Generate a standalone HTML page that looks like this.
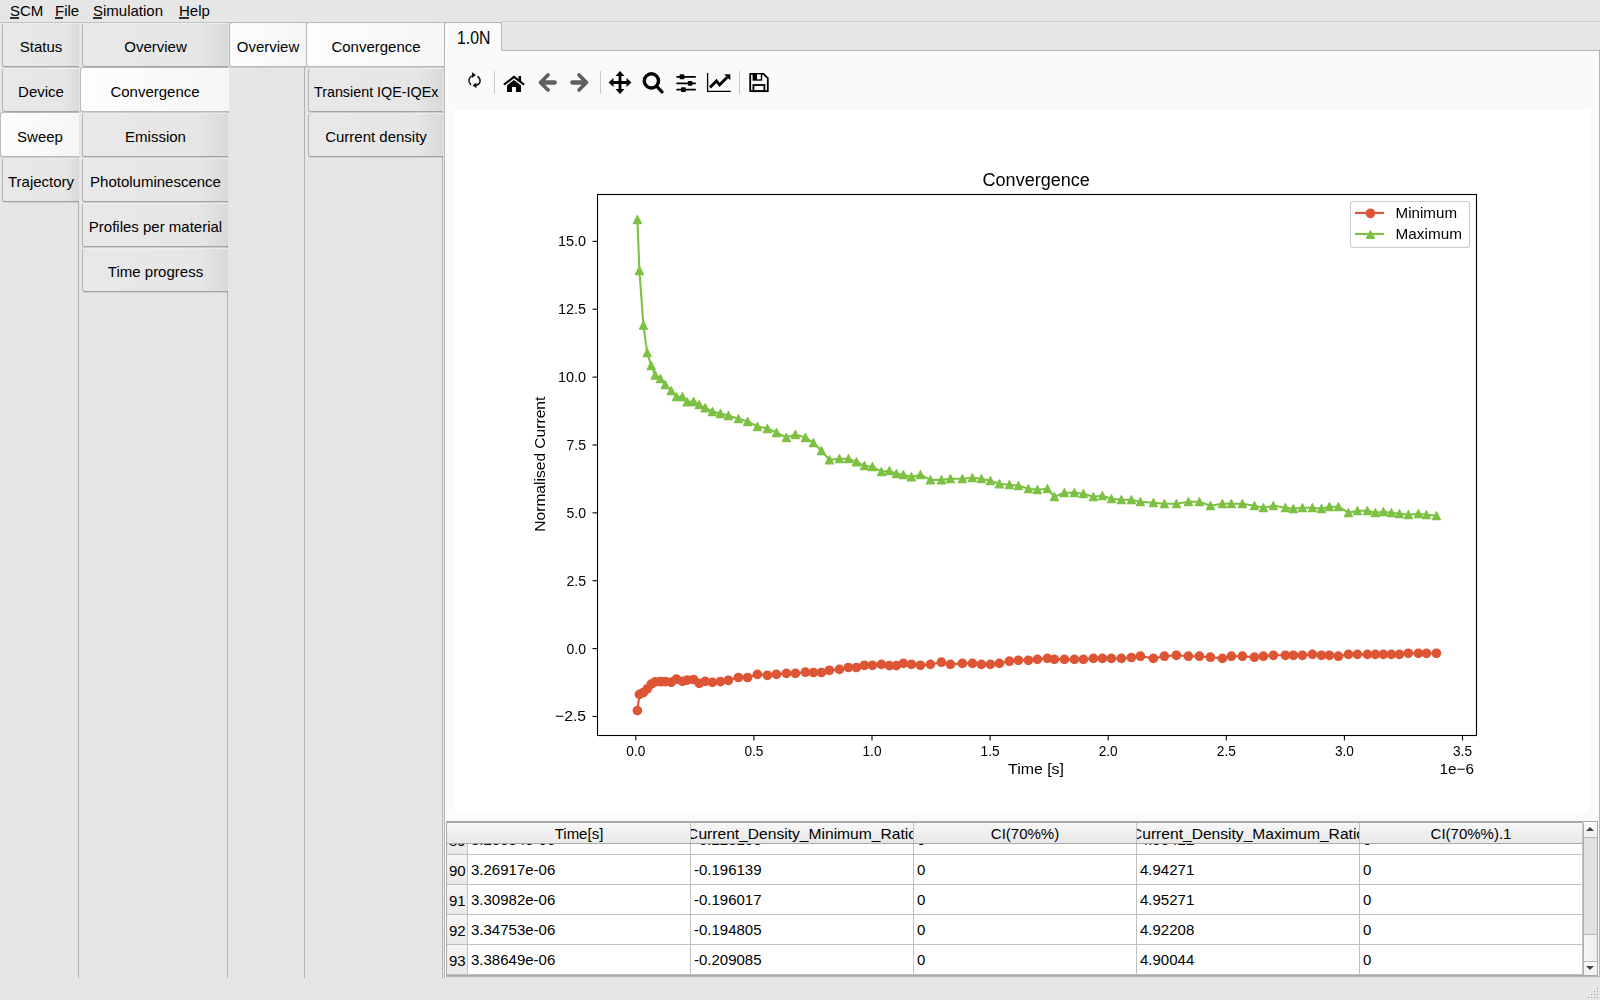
<!DOCTYPE html>
<html><head><meta charset="utf-8"><style>
html,body{margin:0;padding:0;}
body{width:1600px;height:1000px;overflow:hidden;position:relative;background:#e6e6e6;font-family:"Liberation Sans", sans-serif;font-size:15px;color:#000;}
.a{position:absolute;}
.t{position:absolute;white-space:nowrap;line-height:1;}
.tab{position:absolute;box-sizing:border-box;border:1px solid #b4b4b4;border-top-color:#ededed;border-bottom-color:#a4a4a4;box-shadow:0 1px 0 rgba(0,0,0,0.10);border-right:none;border-radius:3px 0 0 3px;
 background:linear-gradient(to right,#e8e8e8 0%,#e6e6e6 80%,#d9d9d9 100%);}
.tab.sel{background:linear-gradient(to right,#fdfdfd,#f6f6f6);border-color:#b8b8b8;}
.lbl{position:absolute;left:0;right:0;text-align:center;white-space:nowrap;line-height:1;}
.vl{position:absolute;width:1px;background:#b4b4b4;}
.hl{position:absolute;height:1px;background:#b4b4b4;}
</style></head><body>

<div class="t" style="left:10px;top:3px;">SCM</div>
<div class="a" style="left:10px;top:17px;width:9px;height:2px;background:#111;opacity:0.85"></div>
<div class="t" style="left:55px;top:3px;">File</div>
<div class="a" style="left:55px;top:17px;width:8px;height:2px;background:#111;opacity:0.85"></div>
<div class="t" style="left:93px;top:3px;">Simulation</div>
<div class="a" style="left:93px;top:17px;width:9px;height:2px;background:#111;opacity:0.85"></div>
<div class="t" style="left:179px;top:3px;">Help</div>
<div class="a" style="left:179px;top:17px;width:10px;height:2px;background:#111;opacity:0.85"></div>
<div class="hl" style="left:0;top:22px;width:502px;background:#c4c4c4"></div>
<div class="hl" style="left:502px;top:21px;width:1098px;background:#cdcdcd"></div>
<div class="vl" style="left:78px;top:22px;height:956px;"></div>
<div class="vl" style="left:227px;top:22px;height:956px;"></div>
<div class="vl" style="left:304px;top:22px;height:956px;"></div>
<div class="vl" style="left:444px;top:22px;height:956px;"></div>
<div class="vl" style="left:442px;top:66px;height:912px;background:#b8b8b8"></div>
<div class="tab" style="left:2px;top:23px;width:77px;height:44px;"><div class="lbl" style="top:15px">Status</div></div>
<div class="tab" style="left:2px;top:68px;width:77px;height:44px;"><div class="lbl" style="top:15px">Device</div></div>
<div class="tab sel" style="left:0px;top:112px;width:79px;height:45px;"><div class="lbl" style="top:16px">Sweep</div></div>
<div class="tab" style="left:2px;top:158px;width:77px;height:44px;"><div class="lbl" style="top:15px">Trajectory</div></div>
<div class="tab" style="left:82px;top:23px;width:146px;height:44px;"><div class="lbl" style="top:15px">Overview</div></div>
<div class="tab sel" style="left:80px;top:67px;width:149px;height:45px;"><div class="lbl" style="top:16px">Convergence</div></div>
<div class="tab" style="left:82px;top:113px;width:146px;height:44px;"><div class="lbl" style="top:15px">Emission</div></div>
<div class="tab" style="left:82px;top:158px;width:146px;height:44px;"><div class="lbl" style="top:15px">Photoluminescence</div></div>
<div class="tab" style="left:82px;top:203px;width:146px;height:44px;"><div class="lbl" style="top:15px">Profiles per material</div></div>
<div class="tab" style="left:82px;top:248px;width:146px;height:44px;"><div class="lbl" style="top:15px">Time progress</div></div>
<div class="tab sel" style="left:229px;top:22px;width:77px;height:45px;"><div class="lbl" style="top:16px">Overview</div></div>
<div class="tab sel" style="left:306px;top:22px;width:139px;height:45px;"><div class="lbl" style="top:16px">Convergence</div></div>
<div class="tab" style="left:308px;top:68px;width:135px;height:44px;"><div class="lbl" style="top:15px"><span style="display:inline-block;transform:scaleX(0.955)">Transient IQE-IQEx</span></div></div>
<div class="tab" style="left:308px;top:113px;width:135px;height:44px;"><div class="lbl" style="top:15px">Current density</div></div>
<div class="a" style="left:445px;top:23px;width:1155px;height:27px;background:#e6e6e6"></div>
<div class="a" style="left:444px;top:50px;width:1156px;height:927px;background:#fafafa;border:1px solid #b4b4b4;box-sizing:border-box;"></div>
<div class="a" style="left:444px;top:22px;width:58px;height:29px;background:#fafafa;border:1px solid #b4b4b4;border-bottom:none;border-radius:3px 3px 0 0;box-sizing:border-box;"><div class="t" style="left:12px;top:6px;font-size:18px;transform:scaleX(0.88);transform-origin:0 0">1.0N</div></div>
<div class="a" style="left:445px;top:51px;width:1px;height:926px;background:#fff"></div>
<div class="a" style="left:455px;top:110px;width:1134px;height:702px;background:#fff"></div>
<svg class="a" style="left:0;top:0;will-change:transform" width="1600" height="1000" viewBox="0 0 1600 1000">
<line x1="592.5" y1="716.47" x2="597.5" y2="716.47" stroke="#000" stroke-width="1.1"/>
<text x="586" y="721.47" text-anchor="end" style="font-family:"Liberation Sans",sans-serif;font-size:14.6px;fill:#000" textLength="31" lengthAdjust="spacingAndGlyphs">−2.5</text>
<line x1="592.5" y1="648.60" x2="597.5" y2="648.60" stroke="#000" stroke-width="1.1"/>
<text x="586" y="653.60" text-anchor="end" style="font-family:"Liberation Sans",sans-serif;font-size:14.6px;fill:#000" textLength="19.5" lengthAdjust="spacingAndGlyphs">0.0</text>
<line x1="592.5" y1="580.73" x2="597.5" y2="580.73" stroke="#000" stroke-width="1.1"/>
<text x="586" y="585.73" text-anchor="end" style="font-family:"Liberation Sans",sans-serif;font-size:14.6px;fill:#000" textLength="19.5" lengthAdjust="spacingAndGlyphs">2.5</text>
<line x1="592.5" y1="512.86" x2="597.5" y2="512.86" stroke="#000" stroke-width="1.1"/>
<text x="586" y="517.86" text-anchor="end" style="font-family:"Liberation Sans",sans-serif;font-size:14.6px;fill:#000" textLength="19.5" lengthAdjust="spacingAndGlyphs">5.0</text>
<line x1="592.5" y1="444.98" x2="597.5" y2="444.98" stroke="#000" stroke-width="1.1"/>
<text x="586" y="449.98" text-anchor="end" style="font-family:"Liberation Sans",sans-serif;font-size:14.6px;fill:#000" textLength="19.5" lengthAdjust="spacingAndGlyphs">7.5</text>
<line x1="592.5" y1="377.11" x2="597.5" y2="377.11" stroke="#000" stroke-width="1.1"/>
<text x="586" y="382.11" text-anchor="end" style="font-family:"Liberation Sans",sans-serif;font-size:14.6px;fill:#000" textLength="28" lengthAdjust="spacingAndGlyphs">10.0</text>
<line x1="592.5" y1="309.24" x2="597.5" y2="309.24" stroke="#000" stroke-width="1.1"/>
<text x="586" y="314.24" text-anchor="end" style="font-family:"Liberation Sans",sans-serif;font-size:14.6px;fill:#000" textLength="28" lengthAdjust="spacingAndGlyphs">12.5</text>
<line x1="592.5" y1="241.37" x2="597.5" y2="241.37" stroke="#000" stroke-width="1.1"/>
<text x="586" y="246.37" text-anchor="end" style="font-family:"Liberation Sans",sans-serif;font-size:14.6px;fill:#000" textLength="28" lengthAdjust="spacingAndGlyphs">15.0</text>
<line x1="635.80" y1="735.5" x2="635.80" y2="740.5" stroke="#000" stroke-width="1.1"/>
<text x="635.80" y="756" text-anchor="middle" style="font-family:"Liberation Sans",sans-serif;font-size:14.6px;fill:#000" textLength="19" lengthAdjust="spacingAndGlyphs">0.0</text>
<line x1="753.90" y1="735.5" x2="753.90" y2="740.5" stroke="#000" stroke-width="1.1"/>
<text x="753.90" y="756" text-anchor="middle" style="font-family:"Liberation Sans",sans-serif;font-size:14.6px;fill:#000" textLength="19" lengthAdjust="spacingAndGlyphs">0.5</text>
<line x1="872.00" y1="735.5" x2="872.00" y2="740.5" stroke="#000" stroke-width="1.1"/>
<text x="872.00" y="756" text-anchor="middle" style="font-family:"Liberation Sans",sans-serif;font-size:14.6px;fill:#000" textLength="19" lengthAdjust="spacingAndGlyphs">1.0</text>
<line x1="990.10" y1="735.5" x2="990.10" y2="740.5" stroke="#000" stroke-width="1.1"/>
<text x="990.10" y="756" text-anchor="middle" style="font-family:"Liberation Sans",sans-serif;font-size:14.6px;fill:#000" textLength="19" lengthAdjust="spacingAndGlyphs">1.5</text>
<line x1="1108.20" y1="735.5" x2="1108.20" y2="740.5" stroke="#000" stroke-width="1.1"/>
<text x="1108.20" y="756" text-anchor="middle" style="font-family:"Liberation Sans",sans-serif;font-size:14.6px;fill:#000" textLength="19" lengthAdjust="spacingAndGlyphs">2.0</text>
<line x1="1226.30" y1="735.5" x2="1226.30" y2="740.5" stroke="#000" stroke-width="1.1"/>
<text x="1226.30" y="756" text-anchor="middle" style="font-family:"Liberation Sans",sans-serif;font-size:14.6px;fill:#000" textLength="19" lengthAdjust="spacingAndGlyphs">2.5</text>
<line x1="1344.40" y1="735.5" x2="1344.40" y2="740.5" stroke="#000" stroke-width="1.1"/>
<text x="1344.40" y="756" text-anchor="middle" style="font-family:"Liberation Sans",sans-serif;font-size:14.6px;fill:#000" textLength="19" lengthAdjust="spacingAndGlyphs">3.0</text>
<line x1="1462.50" y1="735.5" x2="1462.50" y2="740.5" stroke="#000" stroke-width="1.1"/>
<text x="1462.50" y="756" text-anchor="middle" style="font-family:"Liberation Sans",sans-serif;font-size:14.6px;fill:#000" textLength="19" lengthAdjust="spacingAndGlyphs">3.5</text>
<text x="1474" y="774" text-anchor="end" style="font-family:"Liberation Sans",sans-serif;font-size:14.6px;fill:#000" textLength="34.5" lengthAdjust="spacingAndGlyphs">1e−6</text>
<text x="1036" y="774" text-anchor="middle" style="font-family:"Liberation Sans",sans-serif;font-size:14.6px;fill:#000" textLength="56" lengthAdjust="spacingAndGlyphs">Time [s]</text>
<text transform="translate(544.5,464.2) rotate(-90)" x="0" y="0" text-anchor="middle" style="font-family:"Liberation Sans",sans-serif;font-size:14.6px;fill:#000" textLength="135" lengthAdjust="spacingAndGlyphs">Normalised Current</text>
<text x="1036.2" y="186.1" text-anchor="middle" style="font-family:'Liberation Sans',sans-serif;font-size:18px;fill:#000" textLength="107.3" lengthAdjust="spacingAndGlyphs">Convergence</text>
<clipPath id="ax"><rect x="597.5" y="194.5" width="879" height="541"/></clipPath>
<g clip-path="url(#ax)">
<polyline fill="none" stroke="#de5535" stroke-width="2.08" stroke-linejoin="round" stroke-linecap="square" points="637.4,710.6 639.4,694.4 643.4,692.5 647.2,688.9 651.2,684.1 655.2,681.9 660.4,681.7 665.2,681.6 671.2,682.2 676.4,679.2 682.4,681.3 687.2,680.1 693.6,679.5 699.2,683.3 705.2,681.4 712.4,682.4 720.4,681.6 728.4,680.3 738.4,677.5 747.6,677.5 757.4,674.4 767.4,675.3 776.4,674.4 786.4,673.4 795.4,673.4 805.4,672.2 813.4,672.5 821.4,672.5 829.4,670.3 839.4,669.4 848.4,667.5 856.4,667.5 864.4,665.3 872.4,665.3 881.4,664.4 889.4,665.6 896.4,665.6 903.4,663.4 911.4,664.4 920.4,665.3 930.4,664.4 941.4,662.2 950.4,664.4 962.4,663.4 972.4,663.4 981.4,664.4 990.4,664.4 999.4,663.4 1009.4,661.2 1018.4,660.3 1028.4,660.3 1037.4,659.4 1047.4,658.4 1054.4,659.4 1064.4,659.4 1074.4,659.4 1083.4,659.4 1093.4,658.4 1102.4,658.4 1111.4,658.4 1121.4,658.4 1131.4,657.5 1140.4,656.2 1153.4,658.4 1164.4,656.2 1176.4,655.3 1188.4,656.2 1199.4,656.2 1210.4,657.2 1222.4,658.4 1231.4,656.2 1242.4,656.2 1254.4,657.2 1263.4,656.2 1273.4,655.3 1285.4,655.3 1293.4,655.3 1302.4,655.3 1312.4,654.4 1321.4,655.3 1329.4,655.3 1338.4,656.2 1348.4,654.4 1357.4,654.4 1367.4,654.4 1375.4,654.4 1383.4,654.4 1391.4,654.4 1399.4,654.4 1408.4,653.3 1418.4,653.3 1426.4,653.3 1436.4,653.3"/>
<circle cx="637.4" cy="710.6" r="4.85" fill="#de5535"/>
<circle cx="639.4" cy="694.4" r="4.85" fill="#de5535"/>
<circle cx="643.4" cy="692.5" r="4.85" fill="#de5535"/>
<circle cx="647.2" cy="688.9" r="4.85" fill="#de5535"/>
<circle cx="651.2" cy="684.1" r="4.85" fill="#de5535"/>
<circle cx="655.2" cy="681.9" r="4.85" fill="#de5535"/>
<circle cx="660.4" cy="681.7" r="4.85" fill="#de5535"/>
<circle cx="665.2" cy="681.6" r="4.85" fill="#de5535"/>
<circle cx="671.2" cy="682.2" r="4.85" fill="#de5535"/>
<circle cx="676.4" cy="679.2" r="4.85" fill="#de5535"/>
<circle cx="682.4" cy="681.3" r="4.85" fill="#de5535"/>
<circle cx="687.2" cy="680.1" r="4.85" fill="#de5535"/>
<circle cx="693.6" cy="679.5" r="4.85" fill="#de5535"/>
<circle cx="699.2" cy="683.3" r="4.85" fill="#de5535"/>
<circle cx="705.2" cy="681.4" r="4.85" fill="#de5535"/>
<circle cx="712.4" cy="682.4" r="4.85" fill="#de5535"/>
<circle cx="720.4" cy="681.6" r="4.85" fill="#de5535"/>
<circle cx="728.4" cy="680.3" r="4.85" fill="#de5535"/>
<circle cx="738.4" cy="677.5" r="4.85" fill="#de5535"/>
<circle cx="747.6" cy="677.5" r="4.85" fill="#de5535"/>
<circle cx="757.4" cy="674.4" r="4.85" fill="#de5535"/>
<circle cx="767.4" cy="675.3" r="4.85" fill="#de5535"/>
<circle cx="776.4" cy="674.4" r="4.85" fill="#de5535"/>
<circle cx="786.4" cy="673.4" r="4.85" fill="#de5535"/>
<circle cx="795.4" cy="673.4" r="4.85" fill="#de5535"/>
<circle cx="805.4" cy="672.2" r="4.85" fill="#de5535"/>
<circle cx="813.4" cy="672.5" r="4.85" fill="#de5535"/>
<circle cx="821.4" cy="672.5" r="4.85" fill="#de5535"/>
<circle cx="829.4" cy="670.3" r="4.85" fill="#de5535"/>
<circle cx="839.4" cy="669.4" r="4.85" fill="#de5535"/>
<circle cx="848.4" cy="667.5" r="4.85" fill="#de5535"/>
<circle cx="856.4" cy="667.5" r="4.85" fill="#de5535"/>
<circle cx="864.4" cy="665.3" r="4.85" fill="#de5535"/>
<circle cx="872.4" cy="665.3" r="4.85" fill="#de5535"/>
<circle cx="881.4" cy="664.4" r="4.85" fill="#de5535"/>
<circle cx="889.4" cy="665.6" r="4.85" fill="#de5535"/>
<circle cx="896.4" cy="665.6" r="4.85" fill="#de5535"/>
<circle cx="903.4" cy="663.4" r="4.85" fill="#de5535"/>
<circle cx="911.4" cy="664.4" r="4.85" fill="#de5535"/>
<circle cx="920.4" cy="665.3" r="4.85" fill="#de5535"/>
<circle cx="930.4" cy="664.4" r="4.85" fill="#de5535"/>
<circle cx="941.4" cy="662.2" r="4.85" fill="#de5535"/>
<circle cx="950.4" cy="664.4" r="4.85" fill="#de5535"/>
<circle cx="962.4" cy="663.4" r="4.85" fill="#de5535"/>
<circle cx="972.4" cy="663.4" r="4.85" fill="#de5535"/>
<circle cx="981.4" cy="664.4" r="4.85" fill="#de5535"/>
<circle cx="990.4" cy="664.4" r="4.85" fill="#de5535"/>
<circle cx="999.4" cy="663.4" r="4.85" fill="#de5535"/>
<circle cx="1009.4" cy="661.2" r="4.85" fill="#de5535"/>
<circle cx="1018.4" cy="660.3" r="4.85" fill="#de5535"/>
<circle cx="1028.4" cy="660.3" r="4.85" fill="#de5535"/>
<circle cx="1037.4" cy="659.4" r="4.85" fill="#de5535"/>
<circle cx="1047.4" cy="658.4" r="4.85" fill="#de5535"/>
<circle cx="1054.4" cy="659.4" r="4.85" fill="#de5535"/>
<circle cx="1064.4" cy="659.4" r="4.85" fill="#de5535"/>
<circle cx="1074.4" cy="659.4" r="4.85" fill="#de5535"/>
<circle cx="1083.4" cy="659.4" r="4.85" fill="#de5535"/>
<circle cx="1093.4" cy="658.4" r="4.85" fill="#de5535"/>
<circle cx="1102.4" cy="658.4" r="4.85" fill="#de5535"/>
<circle cx="1111.4" cy="658.4" r="4.85" fill="#de5535"/>
<circle cx="1121.4" cy="658.4" r="4.85" fill="#de5535"/>
<circle cx="1131.4" cy="657.5" r="4.85" fill="#de5535"/>
<circle cx="1140.4" cy="656.2" r="4.85" fill="#de5535"/>
<circle cx="1153.4" cy="658.4" r="4.85" fill="#de5535"/>
<circle cx="1164.4" cy="656.2" r="4.85" fill="#de5535"/>
<circle cx="1176.4" cy="655.3" r="4.85" fill="#de5535"/>
<circle cx="1188.4" cy="656.2" r="4.85" fill="#de5535"/>
<circle cx="1199.4" cy="656.2" r="4.85" fill="#de5535"/>
<circle cx="1210.4" cy="657.2" r="4.85" fill="#de5535"/>
<circle cx="1222.4" cy="658.4" r="4.85" fill="#de5535"/>
<circle cx="1231.4" cy="656.2" r="4.85" fill="#de5535"/>
<circle cx="1242.4" cy="656.2" r="4.85" fill="#de5535"/>
<circle cx="1254.4" cy="657.2" r="4.85" fill="#de5535"/>
<circle cx="1263.4" cy="656.2" r="4.85" fill="#de5535"/>
<circle cx="1273.4" cy="655.3" r="4.85" fill="#de5535"/>
<circle cx="1285.4" cy="655.3" r="4.85" fill="#de5535"/>
<circle cx="1293.4" cy="655.3" r="4.85" fill="#de5535"/>
<circle cx="1302.4" cy="655.3" r="4.85" fill="#de5535"/>
<circle cx="1312.4" cy="654.4" r="4.85" fill="#de5535"/>
<circle cx="1321.4" cy="655.3" r="4.85" fill="#de5535"/>
<circle cx="1329.4" cy="655.3" r="4.85" fill="#de5535"/>
<circle cx="1338.4" cy="656.2" r="4.85" fill="#de5535"/>
<circle cx="1348.4" cy="654.4" r="4.85" fill="#de5535"/>
<circle cx="1357.4" cy="654.4" r="4.85" fill="#de5535"/>
<circle cx="1367.4" cy="654.4" r="4.85" fill="#de5535"/>
<circle cx="1375.4" cy="654.4" r="4.85" fill="#de5535"/>
<circle cx="1383.4" cy="654.4" r="4.85" fill="#de5535"/>
<circle cx="1391.4" cy="654.4" r="4.85" fill="#de5535"/>
<circle cx="1399.4" cy="654.4" r="4.85" fill="#de5535"/>
<circle cx="1408.4" cy="653.3" r="4.85" fill="#de5535"/>
<circle cx="1418.4" cy="653.3" r="4.85" fill="#de5535"/>
<circle cx="1426.4" cy="653.3" r="4.85" fill="#de5535"/>
<circle cx="1436.4" cy="653.3" r="4.85" fill="#de5535"/>
<polyline fill="none" stroke="#7dc143" stroke-width="2.08" stroke-linejoin="round" stroke-linecap="square" points="637.4,219.5 639.4,270.6 643.4,325.2 647.2,352.7 651.2,365.5 655.2,375.1 660.4,378.7 665.2,384.7 671.2,390.7 676.4,396.7 682.4,396.7 687.2,401.9 693.6,401.5 699.2,404.7 705.2,407.9 712.4,411.5 720.4,413.5 728.4,415.5 738.4,418.7 747.6,421.5 757.4,426.5 767.4,428.5 776.4,432.5 786.4,437.5 795.4,434.5 805.4,437.5 813.4,442.7 821.4,450.7 829.4,459.9 839.4,458.7 848.4,458.7 856.4,461.9 864.4,465.7 872.4,466.7 881.4,471.7 889.4,470.7 896.4,473.7 903.4,474.7 911.4,476.9 920.4,474.7 930.4,479.9 941.4,479.9 950.4,478.7 962.4,478.7 972.4,477.7 981.4,478.7 990.4,480.7 999.4,483.9 1009.4,484.7 1018.4,485.7 1028.4,488.7 1037.4,489.7 1047.4,488.7 1054.4,496.7 1064.4,492.7 1074.4,492.7 1083.4,493.7 1093.4,496.7 1102.4,495.7 1111.4,498.7 1121.4,499.7 1131.4,499.7 1140.4,501.7 1153.4,502.7 1164.4,503.7 1176.4,503.7 1188.4,501.7 1199.4,501.7 1210.4,505.7 1222.4,503.7 1231.4,503.7 1242.4,503.7 1254.4,505.7 1263.4,507.7 1273.4,505.7 1285.4,507.7 1293.4,508.7 1302.4,507.7 1312.4,507.7 1321.4,508.7 1329.4,506.7 1338.4,506.7 1348.4,512.7 1357.4,510.7 1367.4,510.7 1375.4,512.7 1383.4,511.7 1391.4,512.7 1399.4,513.7 1408.4,514.7 1418.4,513.7 1426.4,514.7 1436.4,515.7"/>
<path d="M637.4,215.5L633.4,223.5L641.4,223.5Z" fill="#7dc143" stroke="#7dc143" stroke-width="1.3" stroke-linejoin="round"/>
<path d="M639.4,266.6L635.4,274.6L643.4,274.6Z" fill="#7dc143" stroke="#7dc143" stroke-width="1.3" stroke-linejoin="round"/>
<path d="M643.4,321.2L639.4,329.2L647.4,329.2Z" fill="#7dc143" stroke="#7dc143" stroke-width="1.3" stroke-linejoin="round"/>
<path d="M647.2,348.7L643.2,356.7L651.2,356.7Z" fill="#7dc143" stroke="#7dc143" stroke-width="1.3" stroke-linejoin="round"/>
<path d="M651.2,361.5L647.2,369.5L655.2,369.5Z" fill="#7dc143" stroke="#7dc143" stroke-width="1.3" stroke-linejoin="round"/>
<path d="M655.2,371.1L651.2,379.1L659.2,379.1Z" fill="#7dc143" stroke="#7dc143" stroke-width="1.3" stroke-linejoin="round"/>
<path d="M660.4,374.7L656.4,382.7L664.4,382.7Z" fill="#7dc143" stroke="#7dc143" stroke-width="1.3" stroke-linejoin="round"/>
<path d="M665.2,380.7L661.2,388.7L669.2,388.7Z" fill="#7dc143" stroke="#7dc143" stroke-width="1.3" stroke-linejoin="round"/>
<path d="M671.2,386.7L667.2,394.7L675.2,394.7Z" fill="#7dc143" stroke="#7dc143" stroke-width="1.3" stroke-linejoin="round"/>
<path d="M676.4,392.7L672.4,400.7L680.4,400.7Z" fill="#7dc143" stroke="#7dc143" stroke-width="1.3" stroke-linejoin="round"/>
<path d="M682.4,392.7L678.4,400.7L686.4,400.7Z" fill="#7dc143" stroke="#7dc143" stroke-width="1.3" stroke-linejoin="round"/>
<path d="M687.2,397.9L683.2,405.9L691.2,405.9Z" fill="#7dc143" stroke="#7dc143" stroke-width="1.3" stroke-linejoin="round"/>
<path d="M693.6,397.5L689.6,405.5L697.6,405.5Z" fill="#7dc143" stroke="#7dc143" stroke-width="1.3" stroke-linejoin="round"/>
<path d="M699.2,400.7L695.2,408.7L703.2,408.7Z" fill="#7dc143" stroke="#7dc143" stroke-width="1.3" stroke-linejoin="round"/>
<path d="M705.2,403.9L701.2,411.9L709.2,411.9Z" fill="#7dc143" stroke="#7dc143" stroke-width="1.3" stroke-linejoin="round"/>
<path d="M712.4,407.5L708.4,415.5L716.4,415.5Z" fill="#7dc143" stroke="#7dc143" stroke-width="1.3" stroke-linejoin="round"/>
<path d="M720.4,409.5L716.4,417.5L724.4,417.5Z" fill="#7dc143" stroke="#7dc143" stroke-width="1.3" stroke-linejoin="round"/>
<path d="M728.4,411.5L724.4,419.5L732.4,419.5Z" fill="#7dc143" stroke="#7dc143" stroke-width="1.3" stroke-linejoin="round"/>
<path d="M738.4,414.7L734.4,422.7L742.4,422.7Z" fill="#7dc143" stroke="#7dc143" stroke-width="1.3" stroke-linejoin="round"/>
<path d="M747.6,417.5L743.6,425.5L751.6,425.5Z" fill="#7dc143" stroke="#7dc143" stroke-width="1.3" stroke-linejoin="round"/>
<path d="M757.4,422.5L753.4,430.5L761.4,430.5Z" fill="#7dc143" stroke="#7dc143" stroke-width="1.3" stroke-linejoin="round"/>
<path d="M767.4,424.5L763.4,432.5L771.4,432.5Z" fill="#7dc143" stroke="#7dc143" stroke-width="1.3" stroke-linejoin="round"/>
<path d="M776.4,428.5L772.4,436.5L780.4,436.5Z" fill="#7dc143" stroke="#7dc143" stroke-width="1.3" stroke-linejoin="round"/>
<path d="M786.4,433.5L782.4,441.5L790.4,441.5Z" fill="#7dc143" stroke="#7dc143" stroke-width="1.3" stroke-linejoin="round"/>
<path d="M795.4,430.5L791.4,438.5L799.4,438.5Z" fill="#7dc143" stroke="#7dc143" stroke-width="1.3" stroke-linejoin="round"/>
<path d="M805.4,433.5L801.4,441.5L809.4,441.5Z" fill="#7dc143" stroke="#7dc143" stroke-width="1.3" stroke-linejoin="round"/>
<path d="M813.4,438.7L809.4,446.7L817.4,446.7Z" fill="#7dc143" stroke="#7dc143" stroke-width="1.3" stroke-linejoin="round"/>
<path d="M821.4,446.7L817.4,454.7L825.4,454.7Z" fill="#7dc143" stroke="#7dc143" stroke-width="1.3" stroke-linejoin="round"/>
<path d="M829.4,455.9L825.4,463.9L833.4,463.9Z" fill="#7dc143" stroke="#7dc143" stroke-width="1.3" stroke-linejoin="round"/>
<path d="M839.4,454.7L835.4,462.7L843.4,462.7Z" fill="#7dc143" stroke="#7dc143" stroke-width="1.3" stroke-linejoin="round"/>
<path d="M848.4,454.7L844.4,462.7L852.4,462.7Z" fill="#7dc143" stroke="#7dc143" stroke-width="1.3" stroke-linejoin="round"/>
<path d="M856.4,457.9L852.4,465.9L860.4,465.9Z" fill="#7dc143" stroke="#7dc143" stroke-width="1.3" stroke-linejoin="round"/>
<path d="M864.4,461.7L860.4,469.7L868.4,469.7Z" fill="#7dc143" stroke="#7dc143" stroke-width="1.3" stroke-linejoin="round"/>
<path d="M872.4,462.7L868.4,470.7L876.4,470.7Z" fill="#7dc143" stroke="#7dc143" stroke-width="1.3" stroke-linejoin="round"/>
<path d="M881.4,467.7L877.4,475.7L885.4,475.7Z" fill="#7dc143" stroke="#7dc143" stroke-width="1.3" stroke-linejoin="round"/>
<path d="M889.4,466.7L885.4,474.7L893.4,474.7Z" fill="#7dc143" stroke="#7dc143" stroke-width="1.3" stroke-linejoin="round"/>
<path d="M896.4,469.7L892.4,477.7L900.4,477.7Z" fill="#7dc143" stroke="#7dc143" stroke-width="1.3" stroke-linejoin="round"/>
<path d="M903.4,470.7L899.4,478.7L907.4,478.7Z" fill="#7dc143" stroke="#7dc143" stroke-width="1.3" stroke-linejoin="round"/>
<path d="M911.4,472.9L907.4,480.9L915.4,480.9Z" fill="#7dc143" stroke="#7dc143" stroke-width="1.3" stroke-linejoin="round"/>
<path d="M920.4,470.7L916.4,478.7L924.4,478.7Z" fill="#7dc143" stroke="#7dc143" stroke-width="1.3" stroke-linejoin="round"/>
<path d="M930.4,475.9L926.4,483.9L934.4,483.9Z" fill="#7dc143" stroke="#7dc143" stroke-width="1.3" stroke-linejoin="round"/>
<path d="M941.4,475.9L937.4,483.9L945.4,483.9Z" fill="#7dc143" stroke="#7dc143" stroke-width="1.3" stroke-linejoin="round"/>
<path d="M950.4,474.7L946.4,482.7L954.4,482.7Z" fill="#7dc143" stroke="#7dc143" stroke-width="1.3" stroke-linejoin="round"/>
<path d="M962.4,474.7L958.4,482.7L966.4,482.7Z" fill="#7dc143" stroke="#7dc143" stroke-width="1.3" stroke-linejoin="round"/>
<path d="M972.4,473.7L968.4,481.7L976.4,481.7Z" fill="#7dc143" stroke="#7dc143" stroke-width="1.3" stroke-linejoin="round"/>
<path d="M981.4,474.7L977.4,482.7L985.4,482.7Z" fill="#7dc143" stroke="#7dc143" stroke-width="1.3" stroke-linejoin="round"/>
<path d="M990.4,476.7L986.4,484.7L994.4,484.7Z" fill="#7dc143" stroke="#7dc143" stroke-width="1.3" stroke-linejoin="round"/>
<path d="M999.4,479.9L995.4,487.9L1003.4,487.9Z" fill="#7dc143" stroke="#7dc143" stroke-width="1.3" stroke-linejoin="round"/>
<path d="M1009.4,480.7L1005.4,488.7L1013.4,488.7Z" fill="#7dc143" stroke="#7dc143" stroke-width="1.3" stroke-linejoin="round"/>
<path d="M1018.4,481.7L1014.4,489.7L1022.4,489.7Z" fill="#7dc143" stroke="#7dc143" stroke-width="1.3" stroke-linejoin="round"/>
<path d="M1028.4,484.7L1024.4,492.7L1032.4,492.7Z" fill="#7dc143" stroke="#7dc143" stroke-width="1.3" stroke-linejoin="round"/>
<path d="M1037.4,485.7L1033.4,493.7L1041.4,493.7Z" fill="#7dc143" stroke="#7dc143" stroke-width="1.3" stroke-linejoin="round"/>
<path d="M1047.4,484.7L1043.4,492.7L1051.4,492.7Z" fill="#7dc143" stroke="#7dc143" stroke-width="1.3" stroke-linejoin="round"/>
<path d="M1054.4,492.7L1050.4,500.7L1058.4,500.7Z" fill="#7dc143" stroke="#7dc143" stroke-width="1.3" stroke-linejoin="round"/>
<path d="M1064.4,488.7L1060.4,496.7L1068.4,496.7Z" fill="#7dc143" stroke="#7dc143" stroke-width="1.3" stroke-linejoin="round"/>
<path d="M1074.4,488.7L1070.4,496.7L1078.4,496.7Z" fill="#7dc143" stroke="#7dc143" stroke-width="1.3" stroke-linejoin="round"/>
<path d="M1083.4,489.7L1079.4,497.7L1087.4,497.7Z" fill="#7dc143" stroke="#7dc143" stroke-width="1.3" stroke-linejoin="round"/>
<path d="M1093.4,492.7L1089.4,500.7L1097.4,500.7Z" fill="#7dc143" stroke="#7dc143" stroke-width="1.3" stroke-linejoin="round"/>
<path d="M1102.4,491.7L1098.4,499.7L1106.4,499.7Z" fill="#7dc143" stroke="#7dc143" stroke-width="1.3" stroke-linejoin="round"/>
<path d="M1111.4,494.7L1107.4,502.7L1115.4,502.7Z" fill="#7dc143" stroke="#7dc143" stroke-width="1.3" stroke-linejoin="round"/>
<path d="M1121.4,495.7L1117.4,503.7L1125.4,503.7Z" fill="#7dc143" stroke="#7dc143" stroke-width="1.3" stroke-linejoin="round"/>
<path d="M1131.4,495.7L1127.4,503.7L1135.4,503.7Z" fill="#7dc143" stroke="#7dc143" stroke-width="1.3" stroke-linejoin="round"/>
<path d="M1140.4,497.7L1136.4,505.7L1144.4,505.7Z" fill="#7dc143" stroke="#7dc143" stroke-width="1.3" stroke-linejoin="round"/>
<path d="M1153.4,498.7L1149.4,506.7L1157.4,506.7Z" fill="#7dc143" stroke="#7dc143" stroke-width="1.3" stroke-linejoin="round"/>
<path d="M1164.4,499.7L1160.4,507.7L1168.4,507.7Z" fill="#7dc143" stroke="#7dc143" stroke-width="1.3" stroke-linejoin="round"/>
<path d="M1176.4,499.7L1172.4,507.7L1180.4,507.7Z" fill="#7dc143" stroke="#7dc143" stroke-width="1.3" stroke-linejoin="round"/>
<path d="M1188.4,497.7L1184.4,505.7L1192.4,505.7Z" fill="#7dc143" stroke="#7dc143" stroke-width="1.3" stroke-linejoin="round"/>
<path d="M1199.4,497.7L1195.4,505.7L1203.4,505.7Z" fill="#7dc143" stroke="#7dc143" stroke-width="1.3" stroke-linejoin="round"/>
<path d="M1210.4,501.7L1206.4,509.7L1214.4,509.7Z" fill="#7dc143" stroke="#7dc143" stroke-width="1.3" stroke-linejoin="round"/>
<path d="M1222.4,499.7L1218.4,507.7L1226.4,507.7Z" fill="#7dc143" stroke="#7dc143" stroke-width="1.3" stroke-linejoin="round"/>
<path d="M1231.4,499.7L1227.4,507.7L1235.4,507.7Z" fill="#7dc143" stroke="#7dc143" stroke-width="1.3" stroke-linejoin="round"/>
<path d="M1242.4,499.7L1238.4,507.7L1246.4,507.7Z" fill="#7dc143" stroke="#7dc143" stroke-width="1.3" stroke-linejoin="round"/>
<path d="M1254.4,501.7L1250.4,509.7L1258.4,509.7Z" fill="#7dc143" stroke="#7dc143" stroke-width="1.3" stroke-linejoin="round"/>
<path d="M1263.4,503.7L1259.4,511.7L1267.4,511.7Z" fill="#7dc143" stroke="#7dc143" stroke-width="1.3" stroke-linejoin="round"/>
<path d="M1273.4,501.7L1269.4,509.7L1277.4,509.7Z" fill="#7dc143" stroke="#7dc143" stroke-width="1.3" stroke-linejoin="round"/>
<path d="M1285.4,503.7L1281.4,511.7L1289.4,511.7Z" fill="#7dc143" stroke="#7dc143" stroke-width="1.3" stroke-linejoin="round"/>
<path d="M1293.4,504.7L1289.4,512.7L1297.4,512.7Z" fill="#7dc143" stroke="#7dc143" stroke-width="1.3" stroke-linejoin="round"/>
<path d="M1302.4,503.7L1298.4,511.7L1306.4,511.7Z" fill="#7dc143" stroke="#7dc143" stroke-width="1.3" stroke-linejoin="round"/>
<path d="M1312.4,503.7L1308.4,511.7L1316.4,511.7Z" fill="#7dc143" stroke="#7dc143" stroke-width="1.3" stroke-linejoin="round"/>
<path d="M1321.4,504.7L1317.4,512.7L1325.4,512.7Z" fill="#7dc143" stroke="#7dc143" stroke-width="1.3" stroke-linejoin="round"/>
<path d="M1329.4,502.7L1325.4,510.7L1333.4,510.7Z" fill="#7dc143" stroke="#7dc143" stroke-width="1.3" stroke-linejoin="round"/>
<path d="M1338.4,502.7L1334.4,510.7L1342.4,510.7Z" fill="#7dc143" stroke="#7dc143" stroke-width="1.3" stroke-linejoin="round"/>
<path d="M1348.4,508.7L1344.4,516.7L1352.4,516.7Z" fill="#7dc143" stroke="#7dc143" stroke-width="1.3" stroke-linejoin="round"/>
<path d="M1357.4,506.7L1353.4,514.7L1361.4,514.7Z" fill="#7dc143" stroke="#7dc143" stroke-width="1.3" stroke-linejoin="round"/>
<path d="M1367.4,506.7L1363.4,514.7L1371.4,514.7Z" fill="#7dc143" stroke="#7dc143" stroke-width="1.3" stroke-linejoin="round"/>
<path d="M1375.4,508.7L1371.4,516.7L1379.4,516.7Z" fill="#7dc143" stroke="#7dc143" stroke-width="1.3" stroke-linejoin="round"/>
<path d="M1383.4,507.7L1379.4,515.7L1387.4,515.7Z" fill="#7dc143" stroke="#7dc143" stroke-width="1.3" stroke-linejoin="round"/>
<path d="M1391.4,508.7L1387.4,516.7L1395.4,516.7Z" fill="#7dc143" stroke="#7dc143" stroke-width="1.3" stroke-linejoin="round"/>
<path d="M1399.4,509.7L1395.4,517.7L1403.4,517.7Z" fill="#7dc143" stroke="#7dc143" stroke-width="1.3" stroke-linejoin="round"/>
<path d="M1408.4,510.7L1404.4,518.7L1412.4,518.7Z" fill="#7dc143" stroke="#7dc143" stroke-width="1.3" stroke-linejoin="round"/>
<path d="M1418.4,509.7L1414.4,517.7L1422.4,517.7Z" fill="#7dc143" stroke="#7dc143" stroke-width="1.3" stroke-linejoin="round"/>
<path d="M1426.4,510.7L1422.4,518.7L1430.4,518.7Z" fill="#7dc143" stroke="#7dc143" stroke-width="1.3" stroke-linejoin="round"/>
<path d="M1436.4,511.7L1432.4,519.7L1440.4,519.7Z" fill="#7dc143" stroke="#7dc143" stroke-width="1.3" stroke-linejoin="round"/>
</g>
<rect x="597.5" y="194.5" width="879" height="541" fill="none" stroke="#000" stroke-width="1.1"/>
<rect x="1350.5" y="201.5" width="119" height="46" rx="2.5" fill="#fff" fill-opacity="0.8" stroke="#cccccc" stroke-width="1.1"/>
<line x1="1355" y1="212.9" x2="1384" y2="212.9" stroke="#de5535" stroke-width="2.08"/>
<circle cx="1370.4" cy="213.3" r="4.85" fill="#de5535"/>
<line x1="1355" y1="234" x2="1384" y2="234" stroke="#7dc143" stroke-width="2.08"/>
<path d="M1370.4,230.8L1366.5,238.4L1374.3,238.4Z" fill="#7dc143" stroke="#7dc143" stroke-width="1.3" stroke-linejoin="round"/>
<text x="1395.6" y="217.8" style="font-family:"Liberation Sans",sans-serif;font-size:14.6px;fill:#000" textLength="61.4" lengthAdjust="spacingAndGlyphs">Minimum</text>
<text x="1395.6" y="238.8" style="font-family:"Liberation Sans",sans-serif;font-size:14.6px;fill:#000" textLength="66.3" lengthAdjust="spacingAndGlyphs">Maximum</text>
</svg>
<svg class="a" style="left:0;top:0" width="1600" height="1000">
<line x1="494.5" y1="71" x2="494.5" y2="94" stroke="#c8c8c8" stroke-width="1"/>
<line x1="600.5" y1="71" x2="600.5" y2="94" stroke="#c8c8c8" stroke-width="1"/>
<line x1="739.5" y1="71" x2="739.5" y2="94" stroke="#c8c8c8" stroke-width="1"/>
<g fill="none" stroke="#111" stroke-width="1.5" stroke-linecap="round"><path d="M472.8,75.4 C468.6,77.2 467.6,81.6 470.6,84.4"/><path d="M477.9,76.6 C481.4,79.4 480.6,84.2 476.2,85.3"/></g>
<path d="M472.0,72.2 L476.0,74.9 L472.0,77.9 Z" fill="#111"/>
<path d="M476.4,82.6 L472.6,85.4 L476.4,88.3 Z" fill="#111"/>
<path d="M504.6,84.2 L514,76.9 L523.4,84.2" fill="none" stroke="#000" stroke-width="2.1" stroke-linecap="round" stroke-linejoin="miter"/>
<path d="M507,85.4 L514,79.9 L521,85.4 L521,92 L516,92 L516,87 L512,87 L512,92 L507,92 Z" fill="#000"/>
<rect x="518.5" y="76" width="2.6" height="5.5" fill="#000"/>
<path d="M548,75 L540.5,82.5 L548,90" fill="none" stroke="#5f5f5f" stroke-width="3.7" stroke-linecap="round" stroke-linejoin="round"/>
<path d="M542,82.5 L554.5,82.5" fill="none" stroke="#5f5f5f" stroke-width="4.6" stroke-linecap="round"/>
<path d="M579,75 L586.5,82.5 L579,90" fill="none" stroke="#5f5f5f" stroke-width="3.7" stroke-linecap="round" stroke-linejoin="round"/>
<path d="M572.5,82.5 L585,82.5" fill="none" stroke="#5f5f5f" stroke-width="4.6" stroke-linecap="round"/>
<path d="M620,73 L620,92 M610.5,82.5 L629.5,82.5" stroke="#000" stroke-width="2.8"/>
<path d="M620,71 L624.5,76 L615.5,76 Z M620,94 L624.5,89 L615.5,89 Z M608.5,82.5 L613.5,78 L613.5,87 Z M631.5,82.5 L626.5,78 L626.5,87 Z" fill="#000"/>
<circle cx="651.4" cy="80.9" r="7.1" fill="none" stroke="#000" stroke-width="3.4"/>
<path d="M656.5,86.2 L662,91.8" stroke="#000" stroke-width="3.2" stroke-linecap="round"/>
<g stroke="#000" stroke-width="1.7"><path d="M676.4,76.9 H695.8 M676.4,83.3 H695.8 M676.4,89.7 H695.8"/></g>
<g fill="#000"><rect x="679.6" y="74.3" width="4.8" height="4.9" rx="0.8"/><rect x="687.8" y="80.9" width="4.6" height="4.9" rx="0.8"/><rect x="681" y="87.2" width="4.8" height="4.9" rx="0.8"/></g>
<path d="M707.6,73 V91.3 H730.8" fill="none" stroke="#000" stroke-width="1.3"/>
<path d="M710.0,87.4 L716.5,80.9 L719.6,84.8 L727.2,77.2" fill="none" stroke="#000" stroke-width="2.8" stroke-linejoin="miter"/>
<path d="M724.2,74.2 L730.3,74.2 L730.3,80.3 Z" fill="#000"/>
<path d="M750.2,73.8 H763.4 L767.8,78.2 V91.2 H750.2 Z" fill="none" stroke="#000" stroke-width="1.8" stroke-linejoin="round"/>
<rect x="752.6" y="73.6" width="9.6" height="7.1" fill="#000"/><rect x="757" y="74.4" width="3.8" height="4.9" fill="#fafafa"/>
<rect x="753.4" y="85.0" width="11" height="6.2" fill="none" stroke="#000" stroke-width="1.8"/>
</svg>
<div class="a" style="left:446px;top:821px;width:1152px;height:155px;box-sizing:border-box;border:1px solid #a8a8a8;background:#fff;overflow:hidden">
<div class="a" style="left:0;top:3px;width:20px;height:29px;background:linear-gradient(to bottom,#f6f6f6,#e9e9e9);"></div>
<div class="t" style="left:2px;top:11px;">89</div>
<div class="t" style="left:24px;top:10px;">3.23084e-06</div>
<div class="t" style="left:247px;top:10px;">-0.223163</div>
<div class="t" style="left:470px;top:10px;">0</div>
<div class="t" style="left:693px;top:10px;">4.93422</div>
<div class="t" style="left:916px;top:10px;">0</div>
<div class="a" style="left:0;top:32px;width:1150px;height:1px;background:#c0c0c0"></div>
<div class="a" style="left:0;top:33px;width:20px;height:29px;background:linear-gradient(to bottom,#f6f6f6,#e9e9e9);"></div>
<div class="t" style="left:2px;top:41px;">90</div>
<div class="t" style="left:24px;top:40px;">3.26917e-06</div>
<div class="t" style="left:247px;top:40px;">-0.196139</div>
<div class="t" style="left:470px;top:40px;">0</div>
<div class="t" style="left:693px;top:40px;">4.94271</div>
<div class="t" style="left:916px;top:40px;">0</div>
<div class="a" style="left:0;top:62px;width:1150px;height:1px;background:#c0c0c0"></div>
<div class="a" style="left:0;top:63px;width:20px;height:29px;background:linear-gradient(to bottom,#f6f6f6,#e9e9e9);"></div>
<div class="t" style="left:2px;top:71px;">91</div>
<div class="t" style="left:24px;top:70px;">3.30982e-06</div>
<div class="t" style="left:247px;top:70px;">-0.196017</div>
<div class="t" style="left:470px;top:70px;">0</div>
<div class="t" style="left:693px;top:70px;">4.95271</div>
<div class="t" style="left:916px;top:70px;">0</div>
<div class="a" style="left:0;top:92px;width:1150px;height:1px;background:#c0c0c0"></div>
<div class="a" style="left:0;top:93px;width:20px;height:29px;background:linear-gradient(to bottom,#f6f6f6,#e9e9e9);"></div>
<div class="t" style="left:2px;top:101px;">92</div>
<div class="t" style="left:24px;top:100px;">3.34753e-06</div>
<div class="t" style="left:247px;top:100px;">-0.194805</div>
<div class="t" style="left:470px;top:100px;">0</div>
<div class="t" style="left:693px;top:100px;">4.92208</div>
<div class="t" style="left:916px;top:100px;">0</div>
<div class="a" style="left:0;top:122px;width:1150px;height:1px;background:#c0c0c0"></div>
<div class="a" style="left:0;top:123px;width:20px;height:29px;background:linear-gradient(to bottom,#f6f6f6,#e9e9e9);"></div>
<div class="t" style="left:2px;top:131px;">93</div>
<div class="t" style="left:24px;top:130px;">3.38649e-06</div>
<div class="t" style="left:247px;top:130px;">-0.209085</div>
<div class="t" style="left:470px;top:130px;">0</div>
<div class="t" style="left:693px;top:130px;">4.90044</div>
<div class="t" style="left:916px;top:130px;">0</div>
<div class="a" style="left:0;top:152px;width:1150px;height:1px;background:#c0c0c0"></div>
<div class="a" style="left:20px;top:0;width:1px;height:160px;background:#c0c0c0"></div>
<div class="a" style="left:243px;top:0;width:1px;height:160px;background:#c0c0c0"></div>
<div class="a" style="left:466px;top:0;width:1px;height:160px;background:#c0c0c0"></div>
<div class="a" style="left:689px;top:0;width:1px;height:160px;background:#c0c0c0"></div>
<div class="a" style="left:912px;top:0;width:1px;height:160px;background:#c0c0c0"></div>
<div class="a" style="left:1135px;top:0;width:1px;height:160px;background:#c0c0c0"></div>
<div class="a" style="left:0;top:0;width:1136px;height:21px;background:linear-gradient(to bottom,#f8f8f8,#e8e8e8);border-bottom:1px solid #a8a8a8;overflow:hidden">
<div class="a" style="left:21px;top:0;width:222px;height:21px;overflow:hidden;border-right:1px solid #c4c4c4;box-sizing:content-box"><div class="t" style="left:50%;top:4px;transform:translateX(-50%) scaleX(1)">Time[s]</div></div>
<div class="a" style="left:244px;top:0;width:222px;height:21px;overflow:hidden;border-right:1px solid #c4c4c4;box-sizing:content-box"><div class="t" style="left:50%;top:4px;transform:translateX(-50%) scaleX(1.04)">Current_Density_Minimum_Ratio</div></div>
<div class="a" style="left:467px;top:0;width:222px;height:21px;overflow:hidden;border-right:1px solid #c4c4c4;box-sizing:content-box"><div class="t" style="left:50%;top:4px;transform:translateX(-50%) scaleX(1)">CI(70%%)</div></div>
<div class="a" style="left:690px;top:0;width:222px;height:21px;overflow:hidden;border-right:1px solid #c4c4c4;box-sizing:content-box"><div class="t" style="left:50%;top:4px;transform:translateX(-50%) scaleX(1.04)">Current_Density_Maximum_Ratio</div></div>
<div class="a" style="left:913px;top:0;width:222px;height:21px;overflow:hidden;border-right:1px solid #c4c4c4;box-sizing:content-box"><div class="t" style="left:50%;top:4px;transform:translateX(-50%) scaleX(1)">CI(70%%).1</div></div>
</div>
<div class="a" style="left:0;top:0;width:21px;height:21px;background:linear-gradient(to bottom,#f8f8f8,#e8e8e8);border-bottom:1px solid #a8a8a8"></div>
<div class="a" style="left:0;top:0;width:1136px;height:1px;background:#a8a8a8"></div>
<div class="a" style="left:1136px;top:1px;width:14px;height:153px;background:#e2e2e2;border-left:1px solid #b0b0b0;border-right:1px solid #b0b0b0;box-sizing:content-box"></div>
<div class="a" style="left:1137px;top:1px;width:14px;height:14px;background:linear-gradient(to bottom,#fafafa,#f0f0f0);border-bottom:1px solid #b8b8b8"></div>
<div class="a" style="left:1139px;top:5px;width:0;height:0;border-left:4px solid transparent;border-right:4px solid transparent;border-bottom:4px solid #444"></div>
<div class="a" style="left:1137px;top:112px;width:14px;height:26px;background:linear-gradient(to right,#f6f6f6,#ececec);border-top:1px solid #b8b8b8;border-bottom:1px solid #b8b8b8"></div>
<div class="a" style="left:1137px;top:140px;width:14px;height:14px;background:linear-gradient(to bottom,#fafafa,#f0f0f0)"></div>
<div class="a" style="left:1139px;top:144px;width:0;height:0;border-left:4px solid transparent;border-right:4px solid transparent;border-top:4px solid #444"></div>
</div>
<svg class="a" style="left:1585px;top:985px" width="15" height="15"><rect x="12" y="3" width="1" height="1" fill="#9a9a9a"/><rect x="9" y="6" width="1" height="1" fill="#9a9a9a"/><rect x="12" y="6" width="1" height="1" fill="#9a9a9a"/><rect x="6" y="9" width="1" height="1" fill="#9a9a9a"/><rect x="9" y="9" width="1" height="1" fill="#9a9a9a"/><rect x="12" y="9" width="1" height="1" fill="#9a9a9a"/><rect x="3" y="12" width="1" height="1" fill="#9a9a9a"/><rect x="6" y="12" width="1" height="1" fill="#9a9a9a"/><rect x="9" y="12" width="1" height="1" fill="#9a9a9a"/><rect x="12" y="12" width="1" height="1" fill="#9a9a9a"/></svg>
</body></html>
